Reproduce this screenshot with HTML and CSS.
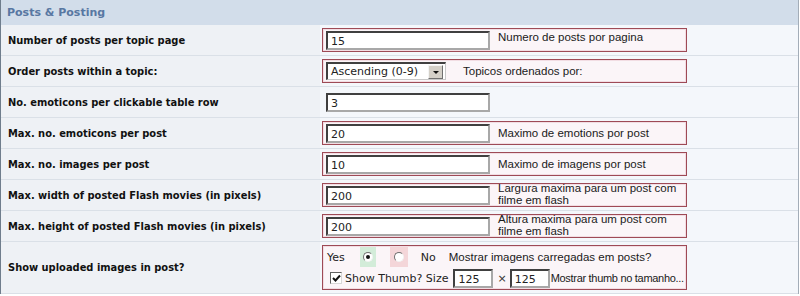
FILE: index.html
```html
<!DOCTYPE html>
<html lang="en">
<head>
    <meta charset="UTF-8">
    <title>Posts &amp; Posting</title>
    <link rel="stylesheet" href="styles.css">
</head>
<body>
    <div class="panel">
        <div class="panel-head">Posts &amp; Posting</div>

        <div class="row">
            <div class="label">Number of posts per topic page</div>
            <div class="field">
                <div class="hint-box">
                    <input class="text-in" type="text" value="15">
                    <span class="hint hint-top">Numero de posts por pagina</span>
                </div>
            </div>
        </div>

        <div class="row">
            <div class="label">Order posts within a topic:</div>
            <div class="field">
                <div class="hint-box">
                    <div class="select">
                        <span class="select-text">Ascending (0-9)</span>
                        <span class="select-btn"><span class="arrow"></span></span>
                    </div>
                    <span class="hint hint-wide">Topicos ordenados por:</span>
                </div>
            </div>
        </div>

        <div class="row">
            <div class="label">No. emoticons per clickable table row</div>
            <div class="field">
                <div class="hint-box plain">
                    <input class="text-in" type="text" value="3">
                </div>
            </div>
        </div>

        <div class="row">
            <div class="label">Max. no. emoticons per post</div>
            <div class="field">
                <div class="hint-box">
                    <input class="text-in" type="text" value="20">
                    <span class="hint">Maximo de emotions por post</span>
                </div>
            </div>
        </div>

        <div class="row">
            <div class="label">Max. no. images per post</div>
            <div class="field">
                <div class="hint-box">
                    <input class="text-in" type="text" value="10">
                    <span class="hint">Maximo de imagens por post</span>
                </div>
            </div>
        </div>

        <div class="row">
            <div class="label">Max. width of posted Flash movies (in pixels)</div>
            <div class="field">
                <div class="hint-box">
                    <input class="text-in" type="text" value="200">
                    <span class="hint hint-two">Largura maxima para um post com<br>filme em flash</span>
                </div>
            </div>
        </div>

        <div class="row">
            <div class="label">Max. height of posted Flash movies (in pixels)</div>
            <div class="field">
                <div class="hint-box">
                    <input class="text-in" type="text" value="200">
                    <span class="hint hint-two">Altura maxima para um post com<br>filme em flash</span>
                </div>
            </div>
        </div>

        <div class="row row-tall">
            <div class="label">Show uploaded images in post?</div>
            <div class="field">
                <div class="hint-box tall">
                    <div class="opt-line">
                        <span class="opt-text">Yes</span>
                        <span class="radio-cell yes"><span class="radio checked"></span></span>
                        <span class="radio-cell no"><span class="radio"></span></span>
                        <span class="opt-text no-text">No</span>
                        <span class="hint">Mostrar imagens carregadas em posts?</span>
                    </div>
                    <div class="opt-line thumb-line">
                        <span class="check">
                            <svg width="9" height="9" viewBox="0 0 9 9"><path d="M1 4 L3.5 6.5 L8 1.5" fill="none" stroke="#111" stroke-width="2"/></svg>
                        </span>
                        <span class="opt-text">Show Thumb? Size</span>
                        <input class="text-in small" type="text" value="125">
                        <span class="times">×</span>
                        <input class="text-in small" type="text" value="125">
                        <span class="hint thumb-hint">Mostrar thumb no tamanho...</span>
                    </div>
                </div>
            </div>
        </div>
    </div>
</body>
</html>
```

FILE: styles.css
```css
body {
    margin: 0;
    background-color: #ffffff;
    font-family: "DejaVu Sans", Verdana, sans-serif;
    color: #111;
}

.panel {
    width: 799px;
    border-left: 1px solid #6f7d8c;
    border-right: 1px solid #a3adb8;
    box-sizing: border-box;
}

.panel-head {
    height: 25px;
    line-height: 25px;
    padding-left: 6px;
    background-color: #d2ddea;
    color: #5877a2;
    font-size: 11px;
    font-weight: bold;
}

.row {
    display: grid;
    grid-template-columns: 319px 1fr;
    border-bottom: 1px solid #dae0e7;
}

.label {
    display: flex;
    align-items: center;
    padding-left: 7px;
    background-color: #eef1f5;
    font-family: "DejaVu Sans Condensed", "DejaVu Sans", sans-serif;
    font-size: 11px;
    font-weight: bold;
    color: #111;
}

.field {
    padding: 3px 0 3px 2px;
    background-color: #f4f7fb;
}

.hint-box {
    display: flex;
    align-items: center;
    width: 365px;
    height: 24px;
    box-sizing: border-box;
    padding-left: 3px;
    border: 1px solid #9e4a56;
    background-color: #fbf5f8;
    box-shadow: inset 0 0 0 1px #f2dde3;
    white-space: nowrap;
}

.hint-box.plain {
    border-color: transparent;
    background-color: transparent;
    box-shadow: none;
}

.text-in {
    flex-shrink: 0;
    width: 164px;
    height: 19px;
    box-sizing: border-box;
    margin: 0;
    padding: 3px 0 0 3px;
    border-top: 2px solid #404040;
    border-left: 2px solid #404040;
    border-right: 2px solid #a8a8a8;
    border-bottom: 2px solid #a8a8a8;
    background-color: #fff;
    font-family: "DejaVu Sans", sans-serif;
    font-size: 11px;
    color: #222;
    outline: none;
}

.text-in.small {
    width: 40px;
}

.hint {
    margin-left: 8px;
    font-family: "Liberation Sans", Arial, sans-serif;
    font-size: 11.5px;
    line-height: 13px;
    color: #1a1a1a;
}

.hint-top {
    align-self: flex-start;
    margin-top: 2px;
}

.hint-wide {
    margin-left: 17px;
}

.hint-two {
    line-height: 12.5px;
    margin-top: -2px;
}

/* fake dropdown */
.select {
    display: flex;
    align-items: center;
    justify-content: space-between;
    width: 120px;
    height: 18px;
    box-sizing: border-box;
    padding: 0 2px 0 3px;
    border-top: 2px solid #404040;
    border-left: 2px solid #404040;
    border-right: 1px solid #c8c8c8;
    border-bottom: 1px solid #c8c8c8;
    background-color: #fff;
    font-size: 11px;
    color: #222;
}

.select-btn {
    display: flex;
    align-items: center;
    justify-content: center;
    width: 13px;
    height: 12px;
    background-color: #d4d0c8;
    border-top: 1px solid #f4f4f4;
    border-left: 1px solid #f4f4f4;
    border-right: 1px solid #707070;
    border-bottom: 1px solid #707070;
}

.arrow {
    width: 0;
    height: 0;
    border-left: 3px solid transparent;
    border-right: 3px solid transparent;
    border-top: 3px solid #111;
    margin-top: 2px;
}

/* last row: radios + thumb size */
.hint-box.tall {
    height: 45px;
    flex-direction: column;
    align-items: flex-start;
    justify-content: center;
    padding-left: 4px;
}

.opt-line {
    display: flex;
    align-items: center;
    height: 21px;
    white-space: nowrap;
}

.opt-text {
    flex-shrink: 0;
    font-size: 11px;
    color: #222;
}

.radio-cell {
    display: flex;
    align-items: center;
    justify-content: center;
    width: 16px;
    height: 20px;
    margin-left: 14px;
}

.radio-cell.yes {
    margin-left: 15px;
    background-color: #d3ecd9;
}

.radio-cell.no {
    width: 18px;
    background-color: #f4d6d9;
}

.radio {
    width: 10px;
    height: 10px;
    box-sizing: border-box;
    border-radius: 50%;
    border: 1px solid;
    border-color: #707070 #f2f2f2 #f2f2f2 #707070;
    background-color: #fff;
    position: relative;
}

.radio.checked::after {
    content: "";
    position: absolute;
    left: 2px;
    top: 2px;
    width: 4px;
    height: 4px;
    border-radius: 50%;
    background-color: #111;
}

.no-text {
    margin-left: 13px;
}

.opt-line .hint {
    margin-left: 13px;
}

.thumb-line {
    padding-left: 3px;
}

.check {
    flex-shrink: 0;
    display: flex;
    align-items: center;
    justify-content: center;
    width: 12px;
    height: 12px;
    box-sizing: border-box;
    margin-right: 3px;
    border-top: 1px solid #606060;
    border-left: 1px solid #606060;
    border-right: 1px solid #d8d8d8;
    border-bottom: 1px solid #d8d8d8;
    background-color: #fff;
}

.thumb-line .text-in {
    margin-left: 5px;
}

.times {
    margin-left: 4px;
    font-size: 11px;
    color: #333;
}

.thumb-line .times + .text-in {
    margin-left: 3px;
}

.thumb-line .hint.thumb-hint {
    margin-left: 1px;
    font-size: 11px;
    letter-spacing: -0.3px;
}
```
